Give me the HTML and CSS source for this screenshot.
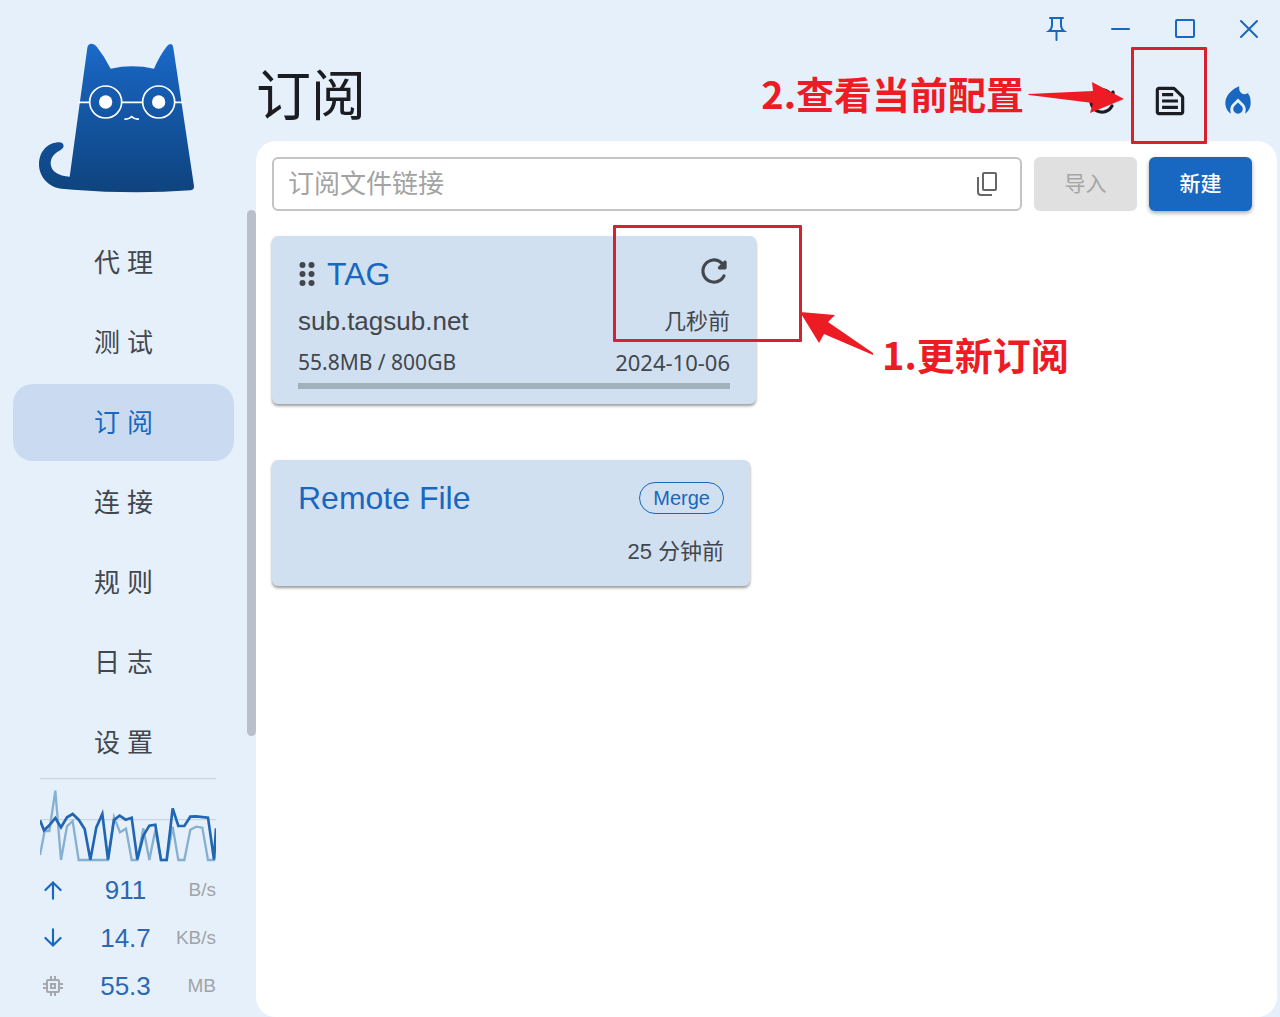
FILE: index.html
```html
<!DOCTYPE html>
<html lang="zh-CN">

<head>
  <meta charset="UTF-8" />
  <meta name="viewport" content="width=device-width, initial-scale=1.0" />
  <title>订阅</title>
  <link rel="stylesheet" href="styles.css">
</head>

<body>
  <aside class="sidebar">
    <div class="logo">
      <svg width="160" height="155" viewBox="51 30 480 465" aria-hidden="true">
        <defs>
          <linearGradient id="fur" x1="0" y1="40" x2="0" y2="490" gradientUnits="userSpaceOnUse">
            <stop offset="0" stop-color="#1b6bcb" />
            <stop offset="0.2" stop-color="#1760b8" />
            <stop offset="1" stop-color="#0e437d" />
          </linearGradient>
        </defs>
        <path fill="url(#fur)" d="M202 53Q204 41 215 41Q225 42 231 51Q253 79 272 116Q337 102 402 116Q418 79 439 51Q446 41 453 42Q459 44 460 54L522 468Q523 479 512 481Q337 493 160 479L124 476C85 472 57 440 57 403C57 362 86 337 118 337Q130 338 131 348Q131 355 122 360C104 369 92 382 92 400C92 424 116 439 149 440Z" />
        <g fill="none" stroke="#fff" stroke-width="5">
          <circle cx="257" cy="216" r="48" />
          <circle cx="416" cy="216" r="48" />
          <path d="M174 217H209M305 217H368M464 217H490" />
          <path d="M313 267Q326 269 335 260Q344 269 357 267" />
        </g>
        <circle cx="257" cy="216" r="20" fill="#fff" />
        <circle cx="416" cy="216" r="20" fill="#fff" />
      </svg>
    </div>

    <div class="menu">
      <nav class="menu-list">
        <a href="#proxies">代 理</a>
        <a href="#test">测 试</a>
        <a href="#profiles" class="active">订 阅</a>
        <a href="#connections">连 接</a>
        <a href="#rules">规 则</a>
        <a href="#logs">日 志</a>
        <a href="#settings">设 置</a>
      </nav>
      <div class="menu-scrollbar"></div>
    </div>

    <div class="traffic">
      <svg class="traffic-graph" viewBox="60 174 528 252" fill="none" aria-hidden="true">
        <path d="M60 176H588M60 299H588" stroke="#cbd5df" stroke-width="4" />
        <path d="M60 405L74 333H88L106 212L123 420L141 319L158 303L176 420H264L282 291L300 337L318 326L335 420H352L370 325L388 420L406 330L423 420H440L458 320L475 420H493L511 329L529 320L547 323L564 420H582L588 350" stroke="#85b0d2" stroke-width="7" />
        <path d="M60 301L72 331L88 316L106 294L123 322L141 292L158 282L176 299L194 327L211 419L229 322L247 282L264 419L282 300L299 287L317 299L335 293L352 418L370 347L388 317L406 314L423 420H440L458 265L475 318H493L511 290L529 289L564 293L582 419L588 325" stroke="#2166b3" stroke-width="8" />
      </svg>
      <div class="traffic-row">
        <svg width="26" height="26" viewBox="0 0 24 24" fill="none" stroke="#1867c0" stroke-width="2" stroke-linecap="round"><path d="M12 20V5M5 12L12 5L19 12" /></svg>
        <span class="value">911</span>
        <span class="unit">B/s</span>
      </div>
      <div class="traffic-row">
        <svg width="26" height="26" viewBox="0 0 24 24" fill="none" stroke="#1867c0" stroke-width="2" stroke-linecap="round"><path d="M12 4V19M5 12L12 19L19 12" /></svg>
        <span class="value">14.7</span>
        <span class="unit">KB/s</span>
      </div>
      <div class="traffic-row">
        <svg width="26" height="26" viewBox="0 0 26 26" fill="none" stroke="#a5a9ae" stroke-width="2"><rect x="7" y="7" width="12" height="12" rx="1" /><rect x="11" y="11" width="4" height="4" /><path d="M11 3V7M15 3V7M11 19V23M15 19V23M3 11H7M3 15H7M19 11H23M19 15H23" /></svg>
        <span class="value">55.3</span>
        <span class="unit">MB</span>
      </div>
    </div>
  </aside>

  <main class="page">
    <header class="page-header">
      <div class="window-controls">
        <button aria-label="置顶"><svg width="26" height="26" viewBox="0 0 26 26"><path d="M7 3H20M9 3V10Q9 14 6 16H21Q18 14 18 10V3M13.500 16V25" /></svg></button>
        <button aria-label="最小化"><svg width="26" height="26" viewBox="0 0 26 26"><path d="M5 14H22" /></svg></button>
        <button aria-label="最大化"><svg width="26" height="26" viewBox="0 0 26 26"><rect x="5" y="5" width="18" height="17" rx="1" /></svg></button>
        <button aria-label="关闭"><svg width="26" height="26" viewBox="0 0 26 26"><path d="M6 6L22 22M22 6L6 22" /></svg></button>
      </div>
      <div class="page-title">
        <h1>订阅</h1>
        <div class="page-actions">
          <button aria-label="更新所有订阅"><svg width="38" height="38" viewBox="0 0 24 24"><path d="M17.65 6.35c-1.63-1.63-3.94-2.57-6.48-2.31-3.67.37-6.69 3.35-7.1 7.02C3.52 15.91 7.27 20 12 20c3.19 0 5.93-1.87 7.21-4.56.32-.67-.16-1.44-.9-1.44-.37 0-.72.2-.88.53-1.13 2.43-3.84 3.97-6.8 3.31-2.22-.49-4.01-2.3-4.48-4.52C5.31 9.44 8.26 6 12 6c1.66 0 3.14.69 4.22 1.78l-1.51 1.51c-.63.63-.19 1.71.7 1.71H19c.55 0 1-.45 1-1V6.41c0-.89-1.08-1.34-1.71-.71l-.64.65z" /></svg></button>
          <button aria-label="查看当前配置"><svg width="38" height="38" viewBox="0 0 24 24"><path d="M14.17 5 19 9.83V19H5V5h9.17m0-2H5c-1.1 0-2 .9-2 2v14c0 1.1.9 2 2 2h14c1.1 0 2-.9 2-2V9.83c0-.53-.21-1.04-.59-1.41l-4.83-4.83c-.37-.38-.88-.59-1.41-.59zM7 15h10v2H7v-2zm0-4h10v2H7v-2zm0-4h7v2H7V7z" /></svg></button>
          <button class="fire" aria-label="重新激活订阅"><svg width="38" height="38" viewBox="0 0 24 24"><path d="M19 6.200C18 7.600 16 8.200 14.400 7.200C12.800 6.200 12.500 4.500 12.800 2.700C8 4.600 4 8.600 4 13.200C4 16 5.400 18.500 7.500 20C6.800 17.500 7 15.500 8.500 13.900L12 10.400L15.500 13.900C17 15.500 17.200 17.500 16.500 20C18.600 18.600 20 16 20 13.200C20 10.500 19.600 8.500 18 7Z" /><path d="M12 12.9l-2.13 2.09c-.56.56-.87 1.29-.87 2.07C9 18.68 10.35 20 12 20s3-1.32 3-2.94c0-.78-.31-1.52-.87-2.07L12 12.9z" /></svg></button>
        </div>
      </div>

      <!-- step 2 -->
      <div class="mark mark-config"></div>
      <svg class="arrow arrow-config" width="96" height="32" viewBox="0 0 96 32"><path d="M0 12L65 9L64 0L96 17L62 31L65 21L1 13Z" /></svg>
      <p class="note note-config">2.查看当前配置</p>
    </header>

    <section class="content">
      <form class="import-bar">
        <div class="url-field">
          <input type="text" aria-label="订阅文件链接" placeholder="订阅文件链接">
          <button type="button" aria-label="粘贴"><svg width="24" height="28" viewBox="0 0 24 28"><rect x="8" y="3" width="13" height="17" rx="1" /><path d="M3 7V22Q3 25 6 25H17" /></svg></button>
        </div>
        <button type="button" class="btn" disabled>导入</button>
        <button type="button" class="btn btn-primary">新建</button>
      </form>

      <div class="profiles">
        <article class="card">
          <div class="card-head">
            <svg class="drag" width="18" height="26" viewBox="6 4 12 16"><circle cx="9" cy="6" r="2" /><circle cx="15" cy="6" r="2" /><circle cx="9" cy="12" r="2" /><circle cx="15" cy="12" r="2" /><circle cx="9" cy="18" r="2" /><circle cx="15" cy="18" r="2" /></svg>
            <h2>TAG</h2>
            <button class="refresh" aria-label="更新"><svg width="38" height="38" viewBox="0 0 24 24"><path d="M17.65 6.35c-1.63-1.63-3.94-2.57-6.48-2.31-3.67.37-6.69 3.35-7.1 7.02C3.52 15.91 7.27 20 12 20c3.19 0 5.93-1.87 7.21-4.56.32-.67-.16-1.44-.9-1.44-.37 0-.72.2-.88.53-1.13 2.43-3.84 3.97-6.8 3.31-2.22-.49-4.01-2.3-4.48-4.52C5.31 9.44 8.26 6 12 6c1.66 0 3.14.69 4.22 1.78l-1.51 1.51c-.63.63-.19 1.71.7 1.71H19c.55 0 1-.45 1-1V6.41c0-.89-1.08-1.34-1.71-.71l-.64.65z" /></svg></button>
          </div>
          <div class="card-row">
            <span class="host">sub.tagsub.net</span>
            <span class="time">几秒前</span>
          </div>
          <div class="card-row usage">
            <span class="amount">55.8MB / 800GB</span>
            <span>2024-10-06</span>
          </div>
          <div class="usage-bar"></div>

          <!-- step 1 -->
          <div class="mark mark-update"></div>
          <svg class="arrow arrow-update" width="74" height="44" viewBox="0 0 74 44"><path d="M0 0L35 3L28 10L73 41V43L24 22L19 31Z" /></svg>
          <p class="note note-update">1.更新订阅</p>
        </article>
      </div>

      <div class="profiles enhanced">
        <article class="card">
          <div class="card-head">
            <h2>Remote File</h2>
            <span class="chip">Merge</span>
          </div>
          <div class="card-row end">
            <span class="time">25 分钟前</span>
          </div>
        </article>
      </div>
    </section>
  </main>
</body>

</html>
```
FILE: styles.css
```css
:root {
  --primary: #1867c0;
  --bg: #e6f0fa;
  --card: #d1e0f0;
  --red: #ed1c24;
}

* {
  box-sizing: border-box;
}

body {
  display: flex;
  height: 100vh;
  margin: 0;
  overflow: hidden;
  background: var(--bg);
  color: #42474e;
  font-family: 'Liberation Sans', 'Noto Sans CJK SC', sans-serif;
}

h1,
h2,
p {
  margin: 0;
  font-weight: normal;
}

button {
  padding: 0;
  border: 0;
  background: none;
  font-family: inherit;
}

svg {
  display: block;
}

/* sidebar */

.sidebar {
  display: flex;
  flex-direction: column;
  flex: none;
  width: 256px;
}

.logo {
  flex: none;
  height: 210px;
  padding: 40px 0 0 37px;
}

.menu {
  display: flex;
  flex: 1;
  min-height: 0;
  overflow: hidden;
}

.menu-list {
  display: flex;
  flex-direction: column;
  flex: 1;
  gap: 3px;
  padding: 14px 13px 0;
}

.menu-list a {
  flex: none;
  padding-top: 2px;
  border-radius: 20px;
  color: #42474e;
  font-size: 26px;
  line-height: 75px;
  text-align: center;
  text-decoration: none;
}

.menu-list a.active {
  background: #cadbf1;
  color: var(--primary);
}

.menu-scrollbar {
  width: 9px;
  height: 526px;
  border-radius: 5px;
  background: #b9c0cc;
}

.traffic {
  flex: none;
  padding: 0 40px 7px;
}

.traffic-graph {
  width: 100%;
  height: 84px;
  margin-bottom: 4px;
}

.traffic-row {
  display: grid;
  grid-template-columns: 40px 1fr 45px;
  align-items: center;
  height: 48px;
}

.traffic-row .value {
  color: #2a67b5;
  font-size: 26px;
  text-align: center;
}

.traffic-row .unit {
  color: #a0a4a9;
  font-size: 19px;
  text-align: right;
}

/* header */

.page {
  display: flex;
  flex-direction: column;
  flex: 1;
  min-width: 0;
}

.page-header {
  position: relative;
  height: 141px;
}

.window-controls {
  display: flex;
  justify-content: flex-end;
  height: 56px;
}

.window-controls button {
  display: grid;
  place-items: center;
  width: 64px;
}

.window-controls svg {
  fill: none;
  stroke: var(--primary);
  stroke-width: 2;
  stroke-linecap: round;
}

.page-title {
  display: flex;
  align-items: center;
  justify-content: space-between;
  height: 80px;
  padding-right: 8px;
}

.page-title h1 {
  color: #1b1d22;
  font-size: 55px;
  line-height: 80px;
}

.page-actions {
  display: flex;
}

.page-actions button {
  display: grid;
  place-items: center;
  width: 68px;
  height: 68px;
  margin-top: 10px;
  fill: #1b1d22;
}

.page-actions .fire {
  fill: var(--primary);
}

/* content */

.content {
  flex: 1;
  margin-right: 3px;
  padding: 16px 25px 16px 16px;
  border-radius: 20px;
  background: #fff;
}

.import-bar {
  display: flex;
  gap: 12px;
}

.url-field {
  display: flex;
  align-items: center;
  flex: 1;
  height: 54px;
  padding: 0 21px 0 14px;
  border: 2px solid #c4c4c4;
  border-radius: 6px;
}

.url-field input {
  flex: 1;
  min-width: 0;
  padding: 0;
  border: 0;
  outline: 0;
  background: none;
  font-family: inherit;
  font-size: 26px;
}

.url-field input::placeholder {
  color: #a3a3a3;
}

.url-field svg {
  fill: none;
  stroke: #666;
  stroke-width: 2;
}

.btn {
  width: 103px;
  height: 54px;
  padding-bottom: 4px;
  border-radius: 6px;
  background: #e0e0e0;
  color: #a6a6a6;
  font-size: 21px;
}

.btn-primary {
  background: var(--primary);
  box-shadow: 0 2px 4px rgba(0, 0, 0, 0.35);
  color: #fff;
  font-weight: 500;
}

.profiles {
  display: grid;
  grid-template-columns: repeat(2, 1fr);
  gap: 12px;
  margin-top: 25px;
}

.profiles.enhanced {
  gap: 24px;
  margin-top: 56px;
}

.card {
  position: relative;
  padding: 18px 26px 15px;
  border-radius: 6px;
  background: var(--card);
  box-shadow: 0 2px 3px rgba(0, 0, 0, 0.4);
  font-size: 22px;
}

.card-head {
  display: flex;
  align-items: center;
  height: 40px;
}

.card-head h2 {
  flex: 1;
  color: var(--primary);
  font-size: 32px;
}

.drag {
  margin-right: 11px;
  fill: #42474e;
}

.refresh {
  margin: 0 -3px 6px 0;
  fill: #42474e;
}

.chip {
  padding: 0 13px;
  border: 1px solid var(--primary);
  border-radius: 16px;
  color: var(--primary);
  font-size: 20px;
  line-height: 30px;
}

.card-row {
  display: flex;
  align-items: center;
  justify-content: space-between;
  height: 32px;
  margin-top: 11px;
}

.card-row.end {
  justify-content: flex-end;
  margin: 17px 0 4px;
}

.host {
  font-size: 26px;
}

.time {
  padding-bottom: 5px;
}

.usage {
  margin-top: 9px;
  font-family: 'Noto Sans', sans-serif;
}

.amount {
  font-size: 21px;
}

.usage-bar {
  height: 6px;
  margin-top: 5px;
  background: #a3b1bd;
}

/* tutorial marks */

.mark,
.arrow,
.note {
  position: absolute;
}

.mark {
  border: 3px solid #d3242e;
  border-radius: 1px;
}

.arrow {
  fill: var(--red);
}

.note {
  color: var(--red);
  font-family: 'Noto Sans CJK SC', sans-serif;
  font-size: 38px;
  font-weight: bold;
  line-height: 48px;
  white-space: nowrap;
}

.mark-config {
  top: 47px;
  right: 73px;
  width: 76px;
  height: 97px;
  z-index: 1;
}

.arrow-config {
  top: 82px;
  right: 156px;
}

.note-config {
  top: 69px;
  right: 256px;
}

.mark-update {
  top: -11px;
  right: -46px;
  width: 189px;
  height: 117px;
}

.arrow-update {
  top: 76px;
  left: calc(100% + 44px);
}

.note-update {
  top: 94px;
  left: calc(100% + 126px);
}
```
